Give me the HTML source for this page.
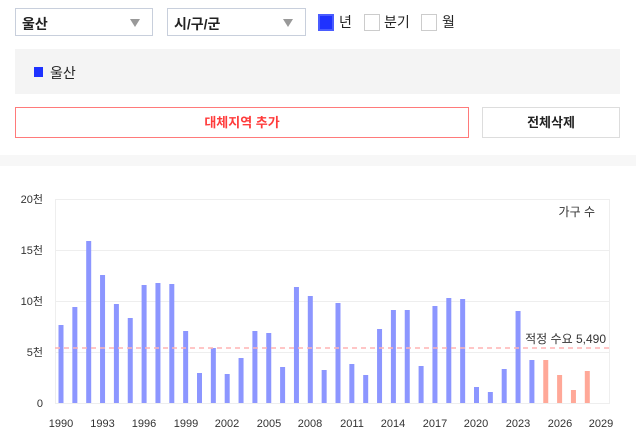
<!DOCTYPE html>
<html><head><meta charset="utf-8"><style>
body{margin:0;width:642px;height:437px;background:#fff;font-family:"Liberation Sans","Noto Sans CJK KR",sans-serif;position:relative;overflow:hidden;color:#222}
.a{position:absolute;box-sizing:border-box}
.sel{border:1px solid #c8cfdc;height:28px;top:8px;font-size:14px;font-weight:bold;padding:5px 6px}
.sel:after{content:"";position:absolute;right:12px;top:10px;border-left:5px solid transparent;border-right:5px solid transparent;border-top:8px solid #999}
.cb{width:16px;height:17px;border:1px solid #ccc;top:14px}
.lab{top:12px;font-size:14px}
</style></head><body>
<div class="a sel" style="left:15px;width:138px">울산</div>
<div class="a sel" style="left:167px;width:139px">시/구/군</div>
<div class="a cb" style="left:318px;border:2px solid #4a5cff;background:#1e32ff"></div><div class="a lab" style="left:339px">년</div>
<div class="a cb" style="left:364px"></div><div class="a lab" style="left:384px">분기</div>
<div class="a cb" style="left:421px"></div><div class="a lab" style="left:442px">월</div>
<div class="a" style="left:15px;top:49px;width:605px;height:45px;background:#f4f4f4"></div>
<div class="a" style="left:34px;top:67px;width:9px;height:10px;background:#1e32ff"></div>
<div class="a" style="left:50px;top:63px;font-size:14px">울산</div>
<div class="a" style="left:15px;top:107px;width:454px;height:31px;border:1px solid #ff7a7a;color:#ff3b3b;font-size:13px;font-weight:bold;text-align:center;line-height:29px">대체지역 추가</div>
<div class="a" style="left:482px;top:107px;width:138px;height:31px;border:1px solid #ddd;font-size:13px;font-weight:bold;text-align:center;line-height:29px">전체삭제</div>
<div class="a" style="left:0;top:155px;width:636px;height:11px;background:#f7f7f7"></div>
<svg class="a" style="left:0;top:0" width="642" height="437" font-family="Liberation Sans, Noto Sans CJK KR, sans-serif" font-size="11" fill="#333">
<g stroke="#eee" stroke-width="1">
<line x1="55" y1="199.5" x2="610" y2="199.5"/><line x1="55" y1="250.5" x2="610" y2="250.5"/><line x1="55" y1="301.5" x2="610" y2="301.5"/><line x1="55" y1="352.5" x2="610" y2="352.5"/><line x1="55" y1="403.5" x2="610" y2="403.5"/><line x1="55.5" y1="199" x2="55.5" y2="403"/><line x1="609.5" y1="199" x2="609.5" y2="403"/>
</g>
<g text-anchor="end"><text x="43" y="203">20천</text><text x="43" y="254">15천</text><text x="43" y="305">10천</text><text x="43" y="356">5천</text><text x="43" y="407">0</text></g>
<g id="bars"></g>
<line x1="55" y1="348" x2="610" y2="348" stroke="#ffb3b3" stroke-width="1.5" stroke-dasharray="5,4"/>
<text x="606" y="343" text-anchor="end" font-size="12">적정 수요 5,490</text>
<text x="595" y="216" text-anchor="end" font-size="12">가구 수</text>
<g text-anchor="middle" font-size="11">
<text x="61" y="427">1990</text><text x="102.5" y="427">1993</text><text x="144" y="427">1996</text><text x="186" y="427">1999</text><text x="227" y="427">2002</text><text x="269" y="427">2005</text><text x="310" y="427">2008</text><text x="352" y="427">2011</text><text x="393" y="427">2014</text><text x="435" y="427">2017</text><text x="476" y="427">2020</text><text x="518" y="427">2023</text><text x="560" y="427">2026</text><text x="601" y="427">2029</text>
</g>
</svg>
<script>
var t=[325,307,241,275,304,318,285,283,284,331,373,348,374,358,331,333,367,287,296,370,303,364,375,329,310,310,366,306,298,299,387,392,369,311,360,360,375,390,371];
var s='';for(var i=0;i<t.length;i++){var x=61+i*13.85-2.5;s+='<rect x="'+x+'" y="'+t[i]+'" width="5" height="'+(403-t[i])+'" fill="'+(i>=35?'#ffa898':'#8c96ff')+'"/>';}
document.getElementById('bars').innerHTML=s;
</script>
</body></html>
